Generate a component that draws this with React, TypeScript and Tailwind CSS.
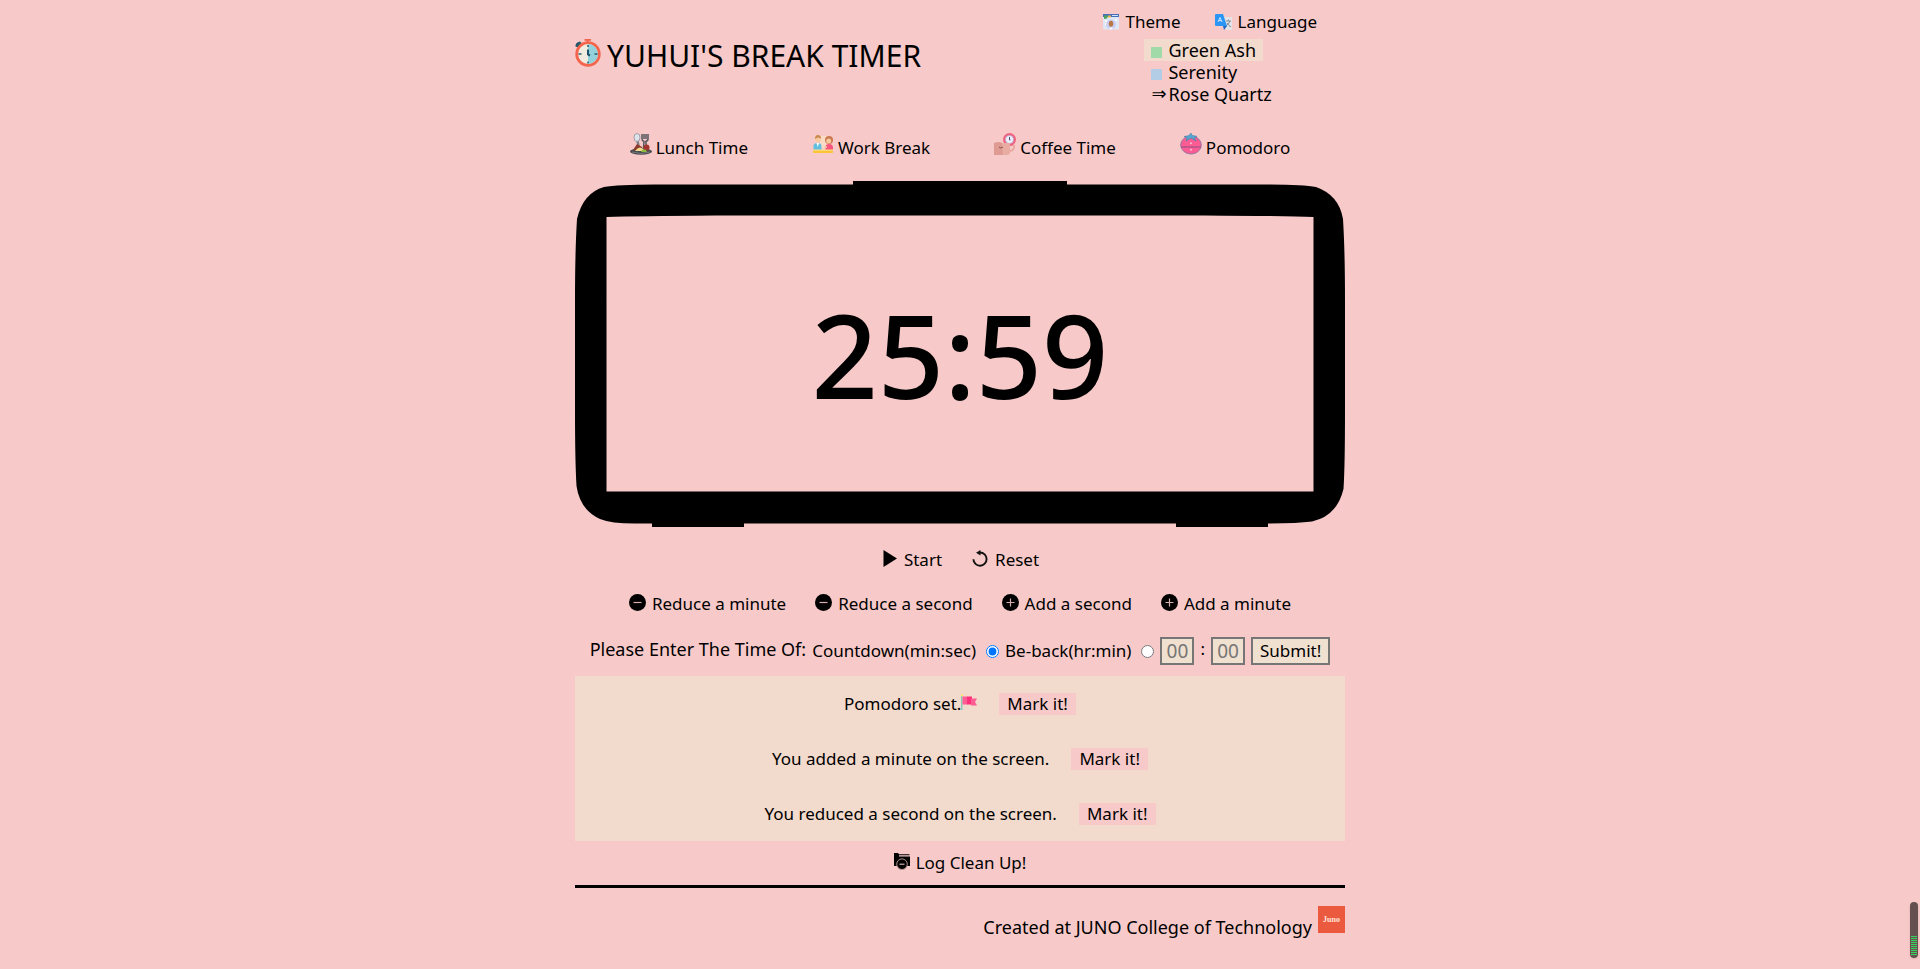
import type { ReactNode } from 'react';

const LunchIcon = () => (
  <svg className="h-[22px] w-[22px]" viewBox="0 0 22 22" aria-hidden="true">
    <path d="M7.5 8 L9 15" stroke="#777c86" strokeWidth="2.4" />
    <ellipse cx="7" cy="4.5" rx="3" ry="4" fill="#dfe3ea" stroke="#8b8e97" strokeWidth="0.8" />
    <path d="M12 1v5q0 2 2 2.400L13.500 15h3L15.800 8.400Q18 8 18 6V1M14 1v5M16 1v5" fill="none" stroke="#54565e" strokeWidth="1.500" />
    <ellipse cx="11" cy="18.500" rx="11" ry="3.300" fill="#4a4a50" />
    <path d="M3 17l4-6 5 3 1 4z" fill="#8c3b2e" />
    <path d="M5 18q5-7 10 0z" fill="#f3dc8b" />
    <circle cx="16.500" cy="14.500" r="3" fill="#a3352f" />
    <path d="M11 19q1-4 5-2l1 2z" fill="#8bb83f" />
    <path d="M2 19q9 3 18 0" stroke="#85868c" strokeWidth="0.800" fill="none" />
  </svg>
);

const WorkIcon = () => (
  <svg className="h-[20px] w-[22px]" viewBox="0 0 22 20" aria-hidden="true">
    <rect x="8" y="1" width="8" height="12" fill="#fbe3c4" opacity="0.700" />
    <path d="M1.500 15V11q0-3 4-3t4 3v4z" fill="#62bfe0" />
    <path d="M4.500 8h2.500l-1.200 4z" fill="#fff" />
    <circle cx="6" cy="4.500" r="2.800" fill="#fbc9a0" />
    <path d="M3 4q0-4 3-4t3.200 3.500L6 2.500z" fill="#c98a4d" />
    <circle cx="17" cy="5" r="4" fill="#c9794f" />
    <circle cx="16.700" cy="6" r="2.500" fill="#fbc9a0" />
    <path d="M13.500 15v-3q0-3 3.500-3t4 3v3z" fill="#f6557d" />
    <path d="M11 12l4-1v2z" fill="#fbc9a0" />
    <rect x="1" y="15" width="20" height="3" rx="1" fill="#ffc338" />
    <rect x="1" y="14.500" width="20" height="1.200" fill="#ffe08a" />
  </svg>
);

const CoffeeIcon = () => (
  <svg className="h-[22px] w-[22px]" viewBox="0 0 22 22" aria-hidden="true">
    <path d="M15 12h3q3 0 2 3-1 3-5 3" fill="none" stroke="#e8a79d" strokeWidth="1.800" />
    <circle cx="15.500" cy="6.500" r="6.500" fill="#f0607f" />
    <circle cx="15.500" cy="6.500" r="4" fill="#eef3ff" stroke="#b9a7cf" strokeWidth="0.800" />
    <path d="M15.500 4v3h1" fill="none" stroke="#4f4d74" strokeWidth="1" />
    <path d="M0 10q5-2 8 0h8v8q0 4-4 4H0z" fill="#df9a92" />
    <path d="M8 10h8v8q0 4-4 4H9z" fill="#e8aca3" />
    <path d="M5 14q1.500 2 4 0" fill="none" stroke="#8a5753" strokeWidth="1" />
  </svg>
);

const TomatoIcon = () => (
  <svg className="h-[22px] w-[22px]" viewBox="0 0 22 22" aria-hidden="true">
    <ellipse cx="11" cy="12" rx="10.300" ry="9" fill="#fb5c94" stroke="#9a719f" strokeWidth="1" />
    <path d="M1 14h20" stroke="#9b4f88" strokeWidth="1.100" />
    <path d="M11 5L6 8l1-3-3-1.500 4.500-.8L11 0l1 2.500 5 .8L14.500 5l1.500 3z" fill="#56a7d0" stroke="#4a7fa8" strokeWidth="0.600" />
    <path d="M11 9l1.200 1.300-1.200 1.300-1.200-1.300zM11 15.500l1.200 1.200-1.200 1.200-1.200-1.200z" fill="#fbc3d7" />
  </svg>
);

const StopwatchIcon = () => (
  <svg className="h-[28px] w-[26px]" viewBox="0 0 26 28" aria-hidden="true">
    <path d="M0.500 7.500q-.5-4 4.500-5l1.500 1.500L3 8.500z" fill="#22566a" />
    <path d="M9.500.8h6.500M12.700 1v4" stroke="#f0644c" strokeWidth="1.800" />
    <circle cx="13" cy="15" r="11.300" fill="#f2ece0" stroke="#f5644c" strokeWidth="2.800" />
    <path d="M13 5a10 10 0 0 1 0 20z" fill="#93d2dd" />
    <path d="M13 6v2M13 22.500v2M3.500 15h3M19.500 15h3" stroke="#275c6b" strokeWidth="1.500" />
    <path d="M13 10.500v5l2 1" fill="none" stroke="#1f5266" strokeWidth="2" />
  </svg>
);

const ThemeIcon = () => (
  <svg className="h-[16px] w-[16px]" viewBox="0 0 16 16" aria-hidden="true">
    <rect width="16" height="15.500" rx="1" fill="#dfe6f4" />
    <path d="M0 0h16v3H0z" fill="#456fb7" />
    <path d="M1 1.500h4l-1 3-3 .5z" fill="#4fa35d" />
    <path d="M5 1.500h3v2H5z" fill="#eeb54c" />
    <path d="M9 1.500h6" stroke="#d3e1ff" strokeWidth="1" />
    <path d="M2 7h2M2 10h2M12 6h2" stroke="#ffffff" strokeWidth="1.500" />
    <circle cx="8" cy="10.500" r="4.800" fill="#c7cdf1" />
    <ellipse cx="8" cy="9.800" rx="2.200" ry="3" fill="#b87745" />
    <path d="M6 13.500h4l-1 2H7z" fill="#f7f7ff" />
  </svg>
);

const LanguageIcon = () => (
  <svg className="h-[16px] w-[17px]" viewBox="0 0 17 16" aria-hidden="true">
    <path d="M7 3h9q1 0 1 1v11q0 1-1 1H11z" fill="#e4e3e8" />
    <path d="M11 7h5M13.300 5.500V7M12 9q2 3 4 4M15 7q-1 3-4 5" fill="none" stroke="#77828d" strokeWidth="0.900" />
    <path d="M1 0h7l4 12H1q-1 0-1-1V1q0-1 1-1z" fill="#2b95f3" />
    <path d="M8 12h4l-3 4z" fill="#1767c6" />
    <path d="M3 8l2-4.500L7 8M4 6.500h2" fill="none" stroke="#d5ecff" strokeWidth="0.900" />
  </svg>
);

const PlayIcon = () => (
  <svg className="h-[17px] w-[17px]" viewBox="0 0 17 17" aria-hidden="true">
    <path d="M2.500 0v17L16 8.500z" fill="#000" />
  </svg>
);

const ResetIcon = () => (
  <svg className="h-[17px] w-[17px]" viewBox="0 0 17 17" aria-hidden="true">
    <path d="M8 2.500a6.600 6.600 0 1 1-6.600 6.800" fill="none" stroke="#111" strokeWidth="1.900" />
    <path d="M8.500 0v5.400L4 2.700z" fill="#111" />
  </svg>
);

const CircleIcon = ({ plus = false }: { plus?: boolean }) => (
  <svg className="h-[17px] w-[17px]" viewBox="0 0 17 17" aria-hidden="true">
    <circle cx="8.500" cy="8.500" r="8.500" fill="#000" />
    <path d={plus ? 'M4.500 8.500h8M8.500 4.500v8' : 'M4.500 8.500h8'} stroke="#d5aead" strokeWidth="1.200" />
  </svg>
);

const CleanIcon = () => (
  <svg className="h-[17px] w-[16px]" viewBox="0 0 16 17" aria-hidden="true">
    <path d="M0 0h4l1 1.200h10.500v1H5v1.300h11V13H0z" fill="#000" />
    <circle cx="8" cy="11.200" r="5.300" fill="#000" stroke="#c79f9f" strokeWidth="0.900" />
    <path d="M5.500 11.200h5" stroke="#e5bbbb" strokeWidth="1.100" />
  </svg>
);

const FlagIcon = () => (
  <svg className="mb-1 h-[16px] w-[16px]" viewBox="0 0 16 16" aria-hidden="true">
    <path d="M.8 2v14" stroke="#6cc6b8" strokeWidth="1.200" />
    <circle cx="1" cy="1.200" r="1.200" fill="#ffe26b" />
    <path d="M1.500 2.500h5v8h-5z" fill="#ff5c93" />
    <path d="M6 2.500h5v8H6z" fill="#ff2f78" />
    <path d="M10 4.500h6l-2 3.500 2 3.500h-6z" fill="#ff5c93" />
  </svg>
);

const ClockFrame = () => (
  <svg className="col-start-1 row-start-1 block w-full" viewBox="0 0 770 346" aria-hidden="true">
    <path
      fillRule="evenodd"
      d="M278 0H492V3.500H690Q728 3.500 741 6Q764 14 768 38Q770 70 770 120V230Q770 285 768.500 308Q762 335 737 340.500Q722 342.500 693 342.500V346H601V342.500H169V346H77V342.500H60Q36 342.500 25 338Q5 329 1.500 305Q0 280 0 230V120Q0 70 2 38Q8 12 29 6Q42 3.500 80 3.500H278ZM31.500 36Q60 35 140 34.500H630Q710 35 738.500 36V310.500H31.500Z"
      fill="#000"
    />
  </svg>
);

function Action({ icon, label }: { icon: ReactNode; label: string }) {
  return (
    <button type="button" className="flex items-center gap-1.5 whitespace-nowrap">
      <span className="mb-1">{icon}</span>
      <span>{label}</span>
    </button>
  );
}

function Preset({ icon, label }: { icon: ReactNode; label: string }) {
  return (
    <button type="button" className="flex items-end gap-1 whitespace-nowrap">
      <span className="mb-1">{icon}</span>
      <span>{label}</span>
    </button>
  );
}

function LogRow({ text, flagged = false }: { text: string; flagged?: boolean }) {
  return (
    <li className="flex h-[55px] items-center justify-center gap-[22px]">
      <span className="flex items-center">
        {text}
        {flagged && <FlagIcon />}
      </span>
      <button type="button" className="bg-[#f7cac9] px-2">Mark it!</button>
    </li>
  );
}

const field =
  'h-7 w-[34px] border-2 border-[#767676] bg-[#f0e0cf] text-center text-[19px] leading-[22px] placeholder:text-[#767676] placeholder:opacity-100';

export default function App() {
  return (
    <div className="min-h-screen bg-[#f7cac9] font-['Comic_Sans_MS','Noto_Sans',sans-serif] text-[17px] leading-[22px] text-black">
      <div className="mx-auto max-w-[770px]">
        <header className="flex justify-between pt-[11px]">
          <h1 className="flex items-center gap-1.5 self-start whitespace-nowrap pt-[27px] text-[30px] leading-9">
            <span className="mb-1.5"><StopwatchIcon /></span>
            YUHUI'S BREAK TIMER
          </h1>
          <div className="mr-7">
            <nav className="flex justify-end gap-[34px]">
              <button type="button" className="flex items-center gap-1.5"><ThemeIcon />Theme</button>
              <button type="button" className="flex items-center gap-1.5"><LanguageIcon />Language</button>
            </nav>
            <ul className="ml-[41px] mt-[6px] flex flex-col items-start text-[18px]">
              <li>
                <button type="button" className="flex items-center gap-1.5 bg-[#f2dacc] px-[7px]">
                  <span className="mt-1 size-[11px] bg-[#a0daa9]" />Green Ash
                </button>
              </li>
              <li>
                <button type="button" className="flex items-center gap-1.5 px-[7px]">
                  <span className="mt-1 size-[11px] bg-[#b4cde6]" />Serenity
                </button>
              </li>
              <li>
                <button type="button" className="flex items-center px-[7px]">
                  <span className="w-[17px] text-left font-['DejaVu_Sans',sans-serif]">⇒</span>Rose Quartz
                </button>
              </li>
            </ul>
          </div>
        </header>

        <nav className="mt-5 flex h-[34px] items-end justify-center gap-16">
          <Preset icon={<LunchIcon />} label="Lunch Time" />
          <Preset icon={<WorkIcon />} label="Work Break" />
          <Preset icon={<CoffeeIcon />} label="Coffee Time" />
          <Preset icon={<TomatoIcon />} label="Pomodoro" />
        </nav>

        <main>
          <section className="mt-[22px] grid place-items-center">
            <ClockFrame />
            <p className="col-start-1 row-start-1 text-[116px] font-medium leading-none">25:59</p>
          </section>

          <div className="mt-[22px] flex justify-center gap-[30px]">
            <Action icon={<PlayIcon />} label="Start" />
            <Action icon={<ResetIcon />} label="Reset" />
          </div>
          <div className="mt-[22px] flex justify-center gap-[29px]">
            <Action icon={<CircleIcon />} label="Reduce a minute" />
            <Action icon={<CircleIcon />} label="Reduce a second" />
            <Action icon={<CircleIcon plus />} label="Add a second" />
            <Action icon={<CircleIcon plus />} label="Add a minute" />
          </div>

          <form className="mt-[22px] flex items-center justify-center gap-[6px] whitespace-nowrap" onSubmit={(e) => e.preventDefault()}>
            <span className="mb-1 text-[18px]">Please Enter The Time Of:</span>
            <label htmlFor="countdown">Countdown(min:sec)</label>
            <input id="countdown" name="mode" type="radio" defaultChecked className="ml-1 size-[13px]" />
            <label htmlFor="beback">Be-back(hr:min)</label>
            <input id="beback" name="mode" type="radio" className="ml-1 size-[13px]" />
            <input aria-label="First value" placeholder="00" className={field} />
            <span className="mb-1">:</span>
            <input aria-label="Second value" placeholder="00" className={field} />
            <button type="submit" className="h-7 border-2 border-[#767676] bg-[#f0e0cf] px-[7px]">Submit!</button>
          </form>

          <ul className="mt-[11px] bg-[#f2dacc]">
            <LogRow text="Pomodoro set." flagged />
            <LogRow text="You added a minute on the screen." />
            <LogRow text="You reduced a second on the screen." />
          </ul>

          <div className="flex justify-center border-b-[3px] border-black pb-[11px] pt-[11px]">
            <Action icon={<CleanIcon />} label="Log Clean Up!" />
          </div>
        </main>

        <footer className="flex items-start justify-end gap-1.5 pt-[18px] text-[18px]">
          <a href="#juno" className="mt-[10px]">Created at JUNO College of Technology</a>
          <span className="flex size-[27px] items-center justify-center bg-[#eb5a3e] font-['Liberation_Serif',serif] text-[8px] font-bold leading-none text-[#ffe4dc]">Juno</span>
        </footer>
      </div>

      <div className="fixed bottom-[11px] right-0.5 flex h-[56px] w-2 flex-col justify-end gap-px rounded bg-[#65504f] px-px pb-[3px] shadow-sm">
        {Array.from({ length: 10 }, (_, i) => (
          <span key={i} className="h-px w-full bg-[#35d45e]" />
        ))}
      </div>
    </div>
  );
}
